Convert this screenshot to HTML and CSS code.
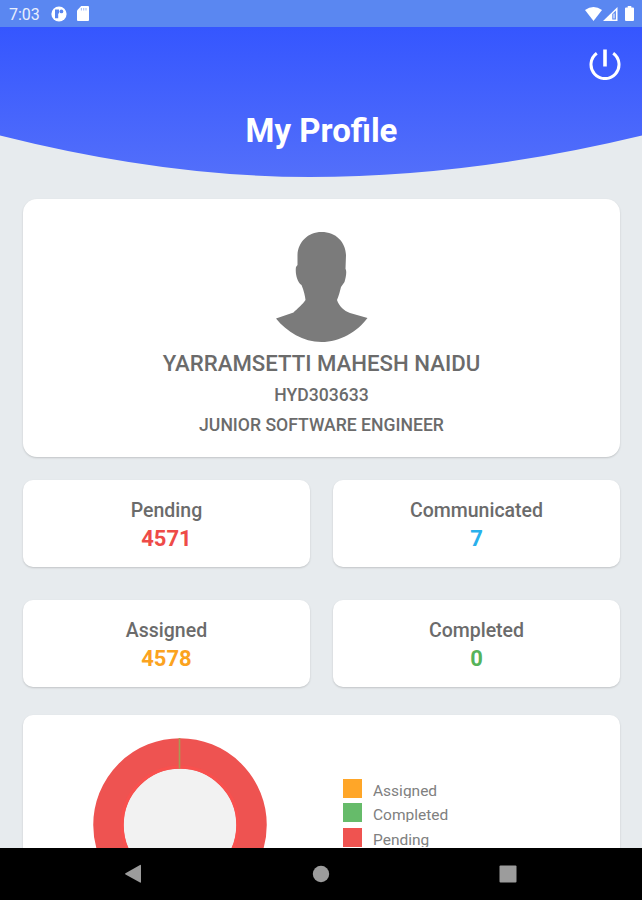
FILE: index.html
```html
<!DOCTYPE html>
<html lang="en">
<head>
    <meta charset="UTF-8">
    <meta name="viewport" content="width=device-width, initial-scale=1.0">
    <title>My Profile</title>
    <link rel="stylesheet" href="styles.css">
</head>
<body>
    <div class="status-bar">
        <span class="time">7:03</span>
        <svg class="status-app" width="16" height="16" viewBox="0 0 16 16">
            <circle cx="8" cy="8" r="7.6" fill="#fff"/>
            <path d="M4 3.600h4v3.800H7.200v4.800H4z" fill="#5a87f1"/>
            <circle cx="10.400" cy="5.400" r="1.900" fill="#5a87f1"/>
        </svg>
        <svg class="status-card" width="12" height="15" viewBox="0 0 12 15">
            <path d="M4.200 0H11q1 0 1 1v13q0 1-1 1H1q-1 0-1-1V4.400z" fill="#fff"/>
            <path d="M4.400 2v2.400M6.700 2v2.400M9 2v2.400" stroke="#a9c0f8" stroke-width="1.100"/>
        </svg>
        <div class="status-right">
            <svg width="17" height="14" viewBox="0 0 17 14"><path d="M0 3Q8.500-3 17 3L8.500 14z" fill="#fff"/></svg>
            <svg width="15" height="14" viewBox="0 0 15 14">
                <path d="M0 14L14.500 0v14z" fill="#fff"/>
                <path d="M9.300 7l3.600-3.500v9H9.300z" fill="#5a87f1"/>
                <path d="M11 6.500v5" stroke="#fff" stroke-width="1.100"/>
            </svg>
            <svg class="battery" width="9" height="15" viewBox="0 0 9 15"><path d="M2.700 0h3.600v1.500H8q1 0 1 1V14q0 1-1 1H1q-1 0-1-1V2.500q0-1 1-1h1.700z" fill="#fff"/></svg>
        </div>
    </div>

    <header class="header">
        <svg class="curve" width="642" height="150" viewBox="0 0 642 150">
            <defs>
                <linearGradient id="blue" x1="0" y1="0" x2="0" y2="1">
                    <stop offset="0" stop-color="#3556ff"/>
                    <stop offset="1" stop-color="#536ffa"/>
                </linearGradient>
            </defs>
            <path d="M0 0H642V108.500Q470 150 310 150Q165 150 0 108.500z" fill="url(#blue)"/>
        </svg>
        <svg class="power" width="32" height="32" viewBox="0 0 32 32" fill="none" stroke="#fff" stroke-width="3">
            <path d="M16 1.500V18.500" stroke-width="3.600"/>
            <path d="M7.800 5.200A14 14 0 1 0 24.200 5.200"/>
        </svg>
        <h1>My Profile</h1>
    </header>

    <main class="content">
        <section class="card profile">
            <svg width="92" height="110" viewBox="0 0 92 110">
                <path d="M45.500 0C60 0 69.500 10 70 23L69.500 37C71 39 70 45 68.500 50L65 55C64 59 63 63 61 68C63 74 68 79 74 81L91.500 86C81 100 64 110 45.500 110C27 110 11 100 0 86.500L17.500 80.500C21 77 27 72 29.500 68C29 64 28 59 25.500 53C21 50 19 41 20 35L21.500 33V23C22 10 32 0 45.500 0z" fill="#7b7b7b"/>
            </svg>
            <h2>YARRAMSETTI MAHESH NAIDU</h2>
            <p>HYD303633</p>
            <p>JUNIOR SOFTWARE ENGINEER</p>
        </section>

        <section class="stats">
            <div class="card stat">
                <h3>Pending</h3>
                <span class="red">4571</span>
            </div>
            <div class="card stat">
                <h3>Communicated</h3>
                <span class="cyan">7</span>
            </div>
            <div class="card stat">
                <h3>Assigned</h3>
                <span class="orange">4578</span>
            </div>
            <div class="card stat">
                <h3>Completed</h3>
                <span class="green">0</span>
            </div>
        </section>

        <section class="card chart">
            <svg class="donut" width="174" height="174" viewBox="0 0 174 174">
                <circle cx="87" cy="87" r="71.500" fill="#f2f2f2" stroke="#ee5351" stroke-width="30.500"/>
                <circle cx="87" cy="87" r="58" fill="none" stroke="#f9504e" stroke-width="3"/>
                <path d="M86.500 0V30.500" stroke="#a89a55" stroke-width="1.600"/>
            </svg>
            <ul class="legend">
                <li><i class="swatch bg-orange"></i><span>Assigned</span></li>
                <li><i class="swatch bg-green"></i><span>Completed</span></li>
                <li><i class="swatch bg-red"></i><span>Pending</span></li>
            </ul>
        </section>
    </main>

    <nav class="nav-bar">
        <svg width="18" height="20" viewBox="0 0 18 20"><path d="M1.500 9.200L16 1q1-.5 1 .5v16.500q0 1-1 .5L1.500 10.500q-1-.7 0-1.300z" fill="#9c9c9c"/></svg>
        <svg width="18" height="18" viewBox="0 0 18 18"><circle cx="9" cy="9" r="8.200" fill="#9c9c9c"/></svg>
        <svg width="18" height="18" viewBox="0 0 18 18"><rect x=".5" y=".5" width="17" height="17" rx="1" fill="#9c9c9c"/></svg>
    </nav>
</body>
</html>
```
FILE: styles.css
```css
* {
    box-sizing: border-box;
}
body {
    font-family: Roboto, Arial, sans-serif;
    display: flex;
    flex-direction: column;
    width: 642px;
    height: 900px;
    margin: 0;
    overflow: hidden;
    background-color: #e7ebee;
    color: #6b6b6b;
}
h1, h2, h3, p, ul {
    margin: 0;
    padding: 0;
}
svg {
    display: block;
    flex: none;
}
.status-bar {
    display: flex;
    align-items: center;
    height: 27px;
    flex: none;
    padding: 0 8px 0 9px;
    background-color: #5a87f1;
    color: #e9effd;
}
.time {
    width: 42px;
    padding-top: 1px;
    font-size: 16px;
}
.status-card {
    margin-left: 10px;
}
.status-right {
    display: flex;
    align-items: center;
    gap: 1px;
    margin-left: auto;
}
.battery {
    margin-left: 6px;
}
.header {
    position: relative;
    height: 150px;
    flex: none;
    display: flex;
    flex-direction: column;
    align-items: center;
    padding: 21px 21px 0;
}
.curve {
    position: absolute;
    top: 0;
    left: 0;
}
.power {
    position: relative;
    align-self: flex-end;
}
h1 {
    position: relative;
    margin-top: 31px;
    padding-left: 1px;
    font-size: 33px;
    line-height: 40px;
    font-weight: 700;
    color: #fff;
}
.content {
    flex: 1;
    min-height: 0;
    overflow: hidden;
    padding: 22px 22px 0 23px;
}
.card {
    background-color: #fff;
    border-radius: 10px;
    box-shadow: 0 1px 2px rgba(0, 0, 0, 0.17);
}
.profile {
    display: flex;
    flex-direction: column;
    align-items: center;
    height: 258px;
    padding-top: 33px;
    border-radius: 14px;
}
h2 {
    margin-top: 6px;
    margin-bottom: 1px;
    font-size: 22.200px;
    line-height: 30px;
    font-weight: 500;
}
.profile p {
    font-size: 17.600px;
    line-height: 29.500px;
    font-weight: 500;
    padding-top: 2px;
    margin-bottom: -2px;
}
.stats {
    display: grid;
    grid-template-columns: 1fr 1fr;
    gap: 33px 23px;
    margin-top: 23px;
}
.stat {
    display: flex;
    flex-direction: column;
    align-items: center;
    height: 87px;
    padding-top: 17px;
}
h3 {
    font-size: 19.500px;
    line-height: 28px;
    font-weight: 500;
}
.stat span {
    font-size: 22px;
    line-height: 28px;
    font-weight: 700;
}
.red {
    color: #ee4b48;
}
.cyan {
    color: #29b0ec;
}
.orange {
    color: #fba31f;
}
.green {
    color: #56b35a;
}
.chart {
    display: flex;
    height: 220px;
    margin-top: 28px;
    padding: 23px 0 0 70px;
}
.legend {
    list-style: none;
    margin: 41px 0 0 76px;
}
.legend li {
    display: flex;
    align-items: flex-start;
    height: 24.300px;
}
/* labels are only as tall as the swatch, descenders get cut */
.legend span {
    height: 19px;
    overflow: hidden;
    font-size: 15.500px;
    line-height: 24px;
    color: #808080;
}
.swatch {
    width: 19px;
    height: 19px;
    margin-right: 11px;
}
.bg-orange {
    background-color: #ffa628;
}
.bg-green {
    background-color: #66bb6a;
}
.bg-red {
    background-color: #ef5350;
}
.nav-bar {
    display: flex;
    align-items: center;
    justify-content: space-between;
    height: 52px;
    flex: none;
    padding: 0 125px 0 124px;
    background-color: #000;
}
```
